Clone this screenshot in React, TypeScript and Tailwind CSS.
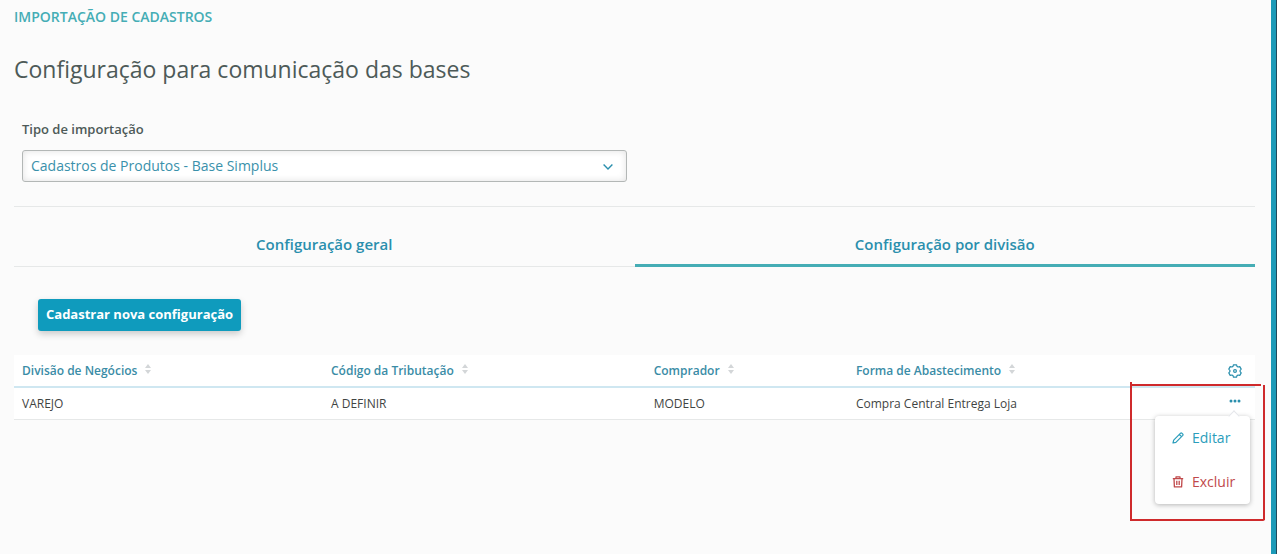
import { useState } from "react";

type Column = { title: string; width: string };

const columns: Column[] = [
  { title: "Divisão de Negócios", width: "w-[24.9%]" },
  { title: "Código da Tributação", width: "w-[26%]" },
  { title: "Comprador", width: "w-[16.3%]" },
  { title: "Forma de Abastecimento", width: "" },
];

const rows = [["VAREJO", "A DEFINIR", "MODELO", "Compra Central Entrega Loja"]];

const tabs = ["Configuração geral", "Configuração por divisão"];

const SortIcon = () => (
  <svg className="-mt-1" width="6" height="10" viewBox="0 0 6 10" fill="#d3d6d8" aria-hidden="true">
    <path d="M3 0 6 4H0zM3 10 0 6h6z" />
  </svg>
);

const GearIcon = () => (
  <svg width="14" height="14" viewBox="0 0 14 14" fill="none" stroke="#2a8fad" strokeWidth="1.2" strokeLinejoin="round" aria-hidden="true">
    <path d="M5.500 .8h3l.5 1.600 1.100.6 1.700-.4 1.400 2.500-1.100 1.200v1.400l1.100 1.200-1.400 2.500-1.700-.4-1.100.6-.5 1.600h-3L5 11.600l-1.100-.6-1.700.4L.8 8.900l1.100-1.200V6.300L.8 5.100l1.400-2.500 1.700.4L5 2.400z" />
    <circle cx="7" cy="7" r="1.400" />
  </svg>
);

const PencilIcon = () => (
  <svg width="12" height="12" viewBox="0 0 12 12" fill="none" stroke="currentColor" strokeWidth="1.200" strokeLinejoin="round" aria-hidden="true">
    <path d="M1 11l.7-2.900L8.600 1.200q.6-.5 1.200 0l1 1q.5.6 0 1.200L3.900 10.300zM7.300 2.500l2.200 2.200" />
  </svg>
);

const TrashIcon = () => (
  <svg width="12" height="12" viewBox="0 0 12 12" fill="none" stroke="currentColor" strokeWidth="1.300" strokeLinejoin="round" aria-hidden="true">
    <path d="M.8 2.600h10.400M4 2.600V.9h4v1.700M2 2.600l.4 8.300h7.200l.4-8.300M4.800 4.700v4.200M7.200 4.700v4.200" />
  </svg>
);

const ActionsMenu = () => (
  <div className="absolute top-7 right-[5px] z-10 w-[95px] rounded bg-white text-sm shadow-[0_1px_5px_rgba(0,0,0,0.28)]">
    <span className="absolute -top-1 right-3 size-2 rotate-45 border-t border-l border-gray-200 bg-white" />
    <button type="button" className="relative flex h-11 w-full items-center gap-2 pl-[17px] text-[#2a9dbb]">
      <PencilIcon />
      Editar
    </button>
    <button type="button" className="flex h-11 w-full items-center gap-2 pl-[17px] text-[#c0494b]">
      <TrashIcon />
      Excluir
    </button>
  </div>
);

const Highlight = () => (
  <svg
    className="pointer-events-none absolute -top-1.5 -right-[11px] z-20"
    width="137"
    height="140"
    viewBox="0 0 137 140"
    fill="none"
    stroke="#cf2a2c"
    strokeWidth="2"
    aria-hidden="true"
  >
    <path d="M2 0v139M1 3h131M135 3v134.500l-1 .5H2" />
  </svg>
);

const App: React.FC = () => {
  const [activeTab, setActiveTab] = useState(1);

  return (
    <div className="flex min-h-screen bg-[#fbfbfb] font-['Open_Sans',sans-serif]">
      <main className="min-w-0 flex-1 pr-4 pl-3.5">
        <p className="pt-[7px] text-sm leading-5 font-semibold text-[#45adb5]">IMPORTAÇÃO DE CADASTROS</p>
        <h1 className="mt-[26px] text-[23px] leading-8 text-[#4d5a58]">Configuração para comunicação das bases</h1>

        <div className="mt-[34px] flex flex-col gap-[11px] px-2">
          <label htmlFor="tipo" className="text-[13px] leading-5 font-semibold text-[#4d5a58]">
            Tipo de importação
          </label>
          <div className="relative w-1/2 max-w-[605px]">
            <select
              id="tipo"
              className="block h-8 w-full appearance-none rounded-[3px] border border-[#b3b7b6] bg-white px-2 text-sm text-[#3a91ab] shadow-[inset_0_0_7px_rgba(0,0,0,0.12)]"
            >
              <option>Cadastros de Produtos - Base Simplus</option>
            </select>
            <svg className="pointer-events-none absolute top-3.5 right-3.5" width="10" height="6" viewBox="0 0 10 6" fill="none" stroke="#2a8fad" strokeWidth="1.400" aria-hidden="true">
              <path d="M.6.6 5 5 9.400.6" />
            </svg>
          </div>
        </div>

        <div className="mt-6 flex border-t border-[#e6e8e8]" role="tablist">
          {tabs.map((tab, i) => (
            <button
              key={tab}
              type="button"
              role="tab"
              aria-selected={activeTab === i}
              onClick={() => setActiveTab(i)}
              className={`flex h-[60px] flex-1 items-center justify-center pt-[18px] text-[15px] font-semibold text-[#2a8fad] ${
                activeTab === i ? "border-b-3 border-[#45adb5] pb-[1px]" : "border-b border-[#e6e8e8] pb-[3px]"
              }`}
            >
              {tab}
            </button>
          ))}
        </div>

        <button
          type="button"
          className="mt-8 ml-6 h-8 rounded-[3px] bg-[#0f9bbd] px-2 text-[13px] font-bold text-white shadow-[0_3px_7px_rgba(0,0,0,0.2)]"
        >
          Cadastrar nova configuração
        </button>

        <table className="mt-6 w-full table-fixed bg-white text-left text-xs">
          <thead>
            <tr className="h-8 border-b-2 border-[#cfe7f1] text-[#3a8ca6]">
              {columns.map((col) => (
                <th key={col.title} className={`px-2 font-semibold ${col.width}`}>
                  <span className="flex items-center gap-2">
                    {col.title}
                    <SortIcon />
                  </span>
                </th>
              ))}
              <th className="w-10">
                <button type="button" aria-label="Configurar colunas" className="mx-auto block">
                  <GearIcon />
                </button>
              </th>
            </tr>
          </thead>
          <tbody>
            {rows.map((row) => (
              <tr key={row[0]} className="h-8 border-b border-[#e6e8e8] text-[#3f4443]">
                {row.map((cell) => (
                  <td key={cell} className="px-2 pt-0.5">
                    {cell}
                  </td>
                ))}
                <td className="relative">
                  <button type="button" aria-label="Ações" className="mx-auto block pb-1">
                    <svg width="12" height="4" viewBox="0 0 12 4" fill="#2a8fad" aria-hidden="true">
                      <circle cx="2" cy="2" r="1.500" />
                      <circle cx="6" cy="2" r="1.500" />
                      <circle cx="10" cy="2" r="1.500" />
                    </svg>
                  </button>
                  <ActionsMenu />
                  <Highlight />
                </td>
              </tr>
            ))}
          </tbody>
        </table>
      </main>
      <div className="w-1.5 border-r border-[#1f4a5c] bg-[#1c9ab8]" />
    </div>
  );
};

export default App;
